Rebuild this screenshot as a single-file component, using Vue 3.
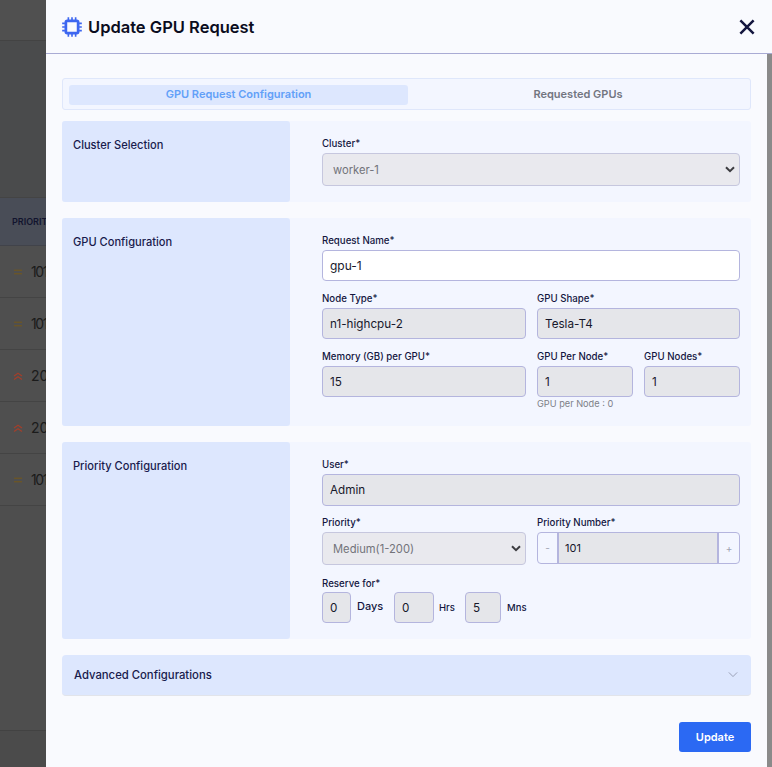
<script setup>
const rows = [
  { icon: 'eq', num: '101' },
  { icon: 'eq', num: '101' },
  { icon: 'up', num: '200' },
  { icon: 'up', num: '200' },
  { icon: 'eq', num: '101' }
]
const pinsH = [7, 11, 15]
</script>

<template>
  <div class="page">
    <aside class="backdrop">
      <div class="bd-top"></div>
      <div class="bd-gap"></div>
      <div class="bd-head"><span>PRIORITY</span></div>
      <div v-for="(r, i) in rows" :key="i" class="bd-row">
        <svg v-if="r.icon === 'eq'" class="bd-ic" viewBox="0 0 10 10"><path d="M1 3.2h8M1 6.8h8" stroke="#75591b" stroke-width="1" fill="none" /></svg>
        <svg v-else class="bd-ic" viewBox="0 0 10 10"><path d="M1 5 5 2.2 9 5M1 8.6l4-2.8 4 2.8" stroke="#a23f2b" stroke-width="1.2" fill="none" /></svg>
        <span class="bd-num" :class="{ ones: r.num === '101' }">{{ r.num }}</span>
      </div>
      <div class="bd-fill"></div>
      <div class="bd-foot"></div>
    </aside>

    <section class="modal">
      <header class="m-head">
        <div class="m-title">
          <svg class="chip" viewBox="0 0 22 22">
            <rect x="4.25" y="4.25" width="13.5" height="13.5" rx="1.5" fill="none" stroke="#3d66f0" stroke-width="3" />
            <g stroke="#3d66f0" stroke-width="1.8">
              <path v-for="p in pinsH" :key="'a' + p" :d="`M${p} 0.2v3M${p} 18.8v3M0.2 ${p}h3M18.8 ${p}h3`" />
            </g>
          </svg>
          <h1>Update GPU Request</h1>
        </div>
        <svg class="close" viewBox="0 0 14 14"><path d="M1.2 1.2 12.8 12.8M12.8 1.2 1.2 12.8" stroke="#14163f" stroke-width="2.2" fill="none" /></svg>
      </header>

      <div class="m-scroll">
        <div class="m-body">
          <nav class="tabs">
            <div class="tab active">GPU Request Configuration</div>
            <div class="tab other">Requested GPUs</div>
          </nav>

          <div class="panel p1">
            <div class="p-side">Cluster Selection</div>
            <div class="p-main">
              <label class="lbl">Cluster*</label>
              <div class="sel-wrap">
                <select class="sel"><option>worker-1</option></select>
                <svg class="sel-arrow" viewBox="0 0 10 7"><path d="M1 1.2 5 5.2 9 1.2" fill="none" stroke="#3c3c40" stroke-width="2" /></svg>
              </div>
            </div>
          </div>

          <div class="panel p2">
            <div class="p-side">GPU Configuration</div>
            <div class="p-main">
              <label class="lbl">Request Name*</label>
              <div class="box white">gpu-1</div>
              <div class="two">
                <div><label class="lbl">Node Type*</label><div class="box">n1-highcpu-2</div></div>
                <div><label class="lbl">GPU Shape*</label><div class="box">Tesla-T4</div></div>
              </div>
              <div class="two">
                <div><label class="lbl">Memory (GB) per GPU*</label><div class="box">15</div></div>
                <div class="two-in">
                  <div>
                    <label class="lbl">GPU Per Node*</label><div class="box">1</div>
                    <div class="hint">GPU per Node : 0</div>
                  </div>
                  <div><label class="lbl">GPU Nodes*</label><div class="box">1</div></div>
                </div>
              </div>
            </div>
          </div>

          <div class="panel p3">
            <div class="p-side">Priority Configuration</div>
            <div class="p-main">
              <label class="lbl">User*</label>
              <div class="box tall">Admin</div>
              <div class="two tight">
                <div>
                  <label class="lbl">Priority*</label>
                  <div class="sel-wrap">
                    <select class="sel"><option>Medium(1-200)</option></select>
                    <svg class="sel-arrow" viewBox="0 0 10 7"><path d="M1 1.2 5 5.2 9 1.2" fill="none" stroke="#3c3c40" stroke-width="2" /></svg>
                  </div>
                </div>
                <div>
                  <label class="lbl">Priority Number*</label>
                  <div class="stepper">
                    <span class="st-btn">-</span>
                    <span class="st-val">101</span>
                    <span class="st-btn r">+</span>
                  </div>
                </div>
              </div>
              <label class="lbl res">Reserve for*</label>
              <div class="reserve">
                <div class="box rb w29">0</div><span class="u days">Days</span>
                <div class="box rb w40">0</div><span class="u hrs">Hrs</span>
                <div class="box rb w36">5</div><span class="u mns">Mns</span>
              </div>
            </div>
          </div>

          <div class="adv">
            <span>Advanced Configurations</span>
            <svg viewBox="0 0 12 8"><path d="M1 1.5 6 6.5 11 1.5" fill="none" stroke="#8d93a8" stroke-width="1" /></svg>
          </div>

          <div class="foot"><button class="upd" type="button">Update</button></div>
        </div>
        <div class="sbar"></div>
      </div>
    </section>
  </div>
</template>

<style>
html, body { margin: 0; padding: 0; }
body { overflow: hidden; }
</style>

<style scoped>
.page {
  display: flex; width: 772px; height: 767px; overflow: hidden;
  font-family: "Inter", "Liberation Sans", sans-serif; color: #14163f;
}
.backdrop { width: 46px; flex: none; display: flex; flex-direction: column; background: #4c4c4c; overflow: hidden; }
.bd-top { height: 40px; background: #505050; border-bottom: 1px solid #434343; flex: none; }
.bd-gap { height: 156px; background: #4a4b4c; flex: none; }
.bd-head { background: #494d57; border-top: 1px solid #444; border-bottom: 1px solid #41434a; flex: none; display: flex; align-items: center; padding-left: 12px; box-sizing: border-box; height: 49px; }
.bd-head span { font-size: 9px; font-weight: 600; color: #12142e; white-space: nowrap; }
.bd-row { height: 52px; box-sizing: border-box; border-bottom: 1px solid #444; flex: none; display: flex; align-items: center; gap: 8px; padding-left: 13px; background: #4f4f4f; }
.bd-ic { width: 10px; height: 10px; flex: none; }
.bd-num { font-size: 14px; color: #1b1b1b; white-space: nowrap; }
.bd-num.ones { letter-spacing: -1.4px; }
.bd-fill { flex: 1; background: #4e4e4e; border-bottom: 1px solid #424242; }
.bd-foot { height: 36px; background: #4b4b4b; flex: none; }

.modal { flex: 1; display: flex; flex-direction: column; background: #f9fafe; min-width: 0; }
.m-head { height: 54px; box-sizing: border-box; flex: none; display: flex; align-items: center; justify-content: space-between; padding: 0 17px 0 16px; border-bottom: 1px solid #a9abd4; }
.m-title { display: flex; align-items: center; gap: 6px; }
.chip { width: 20px; height: 20px; }
h1 { margin: 0; font-size: 16.5px; font-weight: 600; color: #0b0c20; }
.close { width: 16px; height: 16px; }

.m-scroll { flex: 1; display: flex; min-height: 0; }
.m-body { flex: 1; min-width: 0; padding: 24px 16px 0; box-sizing: border-box; display: flex; flex-direction: column; }
.sbar { width: 5px; flex: none; background: #8a8a8a; }

.tabs { height: 32px; box-sizing: border-box; display: flex; padding: 6px 6px; background: #f3f6ff; border: 1px solid #dfe7fb; border-radius: 3px; flex: none; }
.tab { display: flex; align-items: center; justify-content: center; font-size: 11px; font-weight: 600; color: #72757f; border-radius: 3px; height: 20px; box-sizing: border-box; padding-bottom: 2px; }
.tab.active { width: 339px; flex: none; background: #dde7fe; color: #62a0f8; }
.tab.other { flex: 1; padding-left: 4px; }

.panel { display: flex; background: #f3f6ff; border-radius: 3px; flex: none; }
.p1 { height: 81px; margin-top: 11px; }
.p2 { height: 208px; margin-top: 16px; }
.p3 { height: 197px; margin-top: 16px; }
.p-side { width: 228px; flex: none; box-sizing: border-box; background: #dde7fe; border-radius: 3px; padding: 17px 11px 0; font-size: 11.1px; font-weight: 500; line-height: 14px; color: #191b4d; }
.p-main { flex: 1; min-width: 0; padding: 16px 11px 0 32px; display: flex; flex-direction: column; }
.lbl { display: block; font-size: 9.7px; font-weight: 500; line-height: 13px; color: #14163f; white-space: nowrap; margin-bottom: 3px; }
.box { height: 31px; box-sizing: border-box; border: 1px solid #b4b5de; border-radius: 4px; background: #e5e6ea; display: flex; align-items: center; padding: 0 7px; font-size: 11.7px; color: #17182b; }
.box.white { background: #fff; font-size: 12px; }
.box.tall { height: 32px; }
.two { display: grid; grid-template-columns: 204px 203px; gap: 0 11px; margin-top: 11px; }
.two.tight { margin-top: 10px; }
.two-in { display: grid; grid-template-columns: 96px 96px; gap: 0 11px; }
.hint { font-size: 9.2px; line-height: 12px; color: #7d8087; margin-top: 1px; white-space: nowrap; }
.sel-wrap { position: relative; height: 33px; }
.sel { appearance: none; width: 100%; height: 33px; box-sizing: border-box; border: 1px solid #c6c7de; border-radius: 4px; background-color: #e9e9ee; color: #72737a; font-family: inherit; font-size: 11.2px; padding: 0 10px; display: block; }
.sel-arrow { position: absolute; right: 5px; top: 13px; width: 10px; height: 7px; pointer-events: none; }
.stepper { display: flex; height: 32px; box-sizing: border-box; border: 1px solid #b4b5de; border-radius: 4px; overflow: hidden; background: #f3f6ff; }
.st-btn { width: 19px; flex: none; display: flex; align-items: center; justify-content: center; font-size: 10px; color: #a0a3b2; }
.st-btn.r { width: 20px; }
.st-val { flex: 1; background: #e5e6ea; border-left: 2px solid #b4b5de; border-right: 2px solid #b4b5de; display: flex; align-items: center; padding-left: 6px; font-size: 11px; color: #17182b; }
.res { margin-top: 12px; margin-bottom: 2px; }
.reserve { display: flex; align-items: center; height: 31px; }
.rb { flex: none; }
.w29 { width: 29px; }
.w40 { width: 40px; }
.w36 { width: 36px; }
.u { font-size: 9.5px; font-weight: 500; color: #14163f; margin-left: 6px; }
.days { font-size: 11px; width: 31px; margin-right: 6px; margin-top: -3px; }
.hrs { width: 20px; margin-left: 5px; margin-right: 6px; }

.adv { margin-top: 16px; height: 41px; box-sizing: border-box; flex: none; display: flex; align-items: center; justify-content: space-between; padding: 0 13px 1px 12px; background: #dde7fe; border-radius: 4px; border-bottom: 1px solid #e2e4ea; font-size: 11.3px; font-weight: 500; color: #191b4d; }
.adv svg { width: 10px; height: 7px; }
.foot { display: flex; justify-content: flex-end; margin-top: 26px; }
.upd { width: 72px; height: 30px; border: 0; border-radius: 3px; background: #2b69f3; color: #fff; font-family: inherit; font-size: 11px; font-weight: 600; padding: 0; }
</style>
